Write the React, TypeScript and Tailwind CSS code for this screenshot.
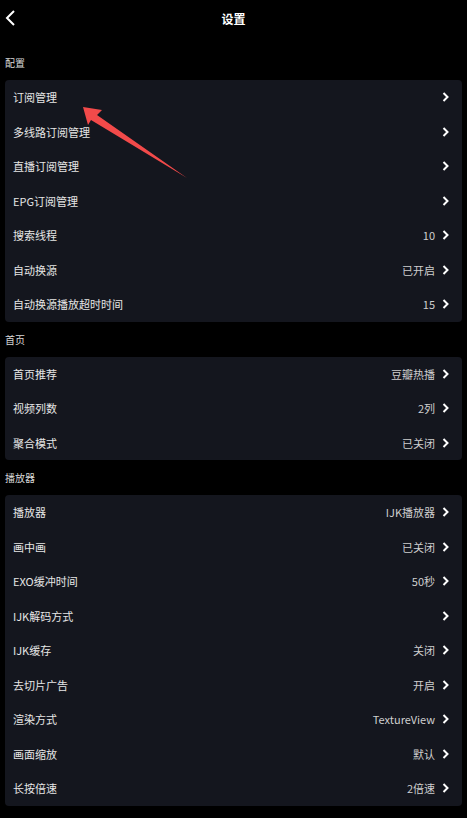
type Row = { name: string; value?: string }

const sections: { title: string; rows: Row[] }[] = [
  {
    title: '配置',
    rows: [
      { name: '订阅管理' },
      { name: '多线路订阅管理' },
      { name: '直播订阅管理' },
      { name: 'EPG订阅管理' },
      { name: '搜索线程', value: '10' },
      { name: '自动换源', value: '已开启' },
      { name: '自动换源播放超时时间', value: '15' },
    ],
  },
  {
    title: '首页',
    rows: [
      { name: '首页推荐', value: '豆瓣热播' },
      { name: '视频列数', value: '2列' },
      { name: '聚合模式', value: '已关闭' },
    ],
  },
  {
    title: '播放器',
    rows: [
      { name: '播放器', value: 'IJK播放器' },
      { name: '画中画', value: '已关闭' },
      { name: 'EXO缓冲时间', value: '50秒' },
      { name: 'IJK解码方式' },
      { name: 'IJK缓存', value: '关闭' },
      { name: '去切片广告', value: '开启' },
      { name: '渲染方式', value: 'TextureView' },
      { name: '画面缩放', value: '默认' },
      { name: '长按倍速', value: '2倍速' },
    ],
  },
]

function Chevron() {
  return (
    <svg width="7" height="10" viewBox="0 0 7 10">
      <polyline points="1.5,1 5.5,5 1.5,9" fill="none" stroke="white" strokeWidth="2" />
    </svg>
  )
}

export default function App() {
  return (
    <div
      className="relative w-[467px] h-[818px] bg-black text-white overflow-hidden"
      style={{ fontFamily: '"Noto Sans CJK SC", "Noto Sans", sans-serif' }}
    >
      {/* HEADER */}
      <div className="relative h-[38px] flex items-center justify-center">
        <svg className="absolute left-[3px] top-[9px]" width="14" height="18" viewBox="0 0 14 18">
          <polyline points="11,2 4,9 11,16" fill="none" stroke="white" strokeWidth="2" />
        </svg>
        <span className="text-[12px] font-bold text-white">设置</span>
      </div>

      {/* LIST */}
      <div className="mt-[7px] px-[5px]">
        {sections.map((section) => (
          <div key={section.title}>
            <div className="h-[35px] flex items-center text-[10px] text-[#d8d8d8]">{section.title}</div>
            <div className="bg-[#14161e] rounded-[4px]">
              {section.rows.map((row) => (
                <div key={row.name} className="h-[34.5px] flex items-center justify-between pl-[8px] pr-[13px]">
                  <span className="text-[11px] text-[#e6e6e6]">{row.name}</span>
                  <div className="flex items-center gap-[7px]">
                    {row.value && <span className="text-[11px] text-[#cfcfcf]">{row.value}</span>}
                    <Chevron />
                  </div>
                </div>
              ))}
            </div>
          </div>
        ))}
      </div>

      {/* RED ARROW */}
      <svg className="absolute left-0 top-0 pointer-events-none" width="467" height="818">
        <polygon points="83,107 102,110 97,115 187,178 91,120 88,125" fill="#f24a4a" />
      </svg>
    </div>
  )
}
